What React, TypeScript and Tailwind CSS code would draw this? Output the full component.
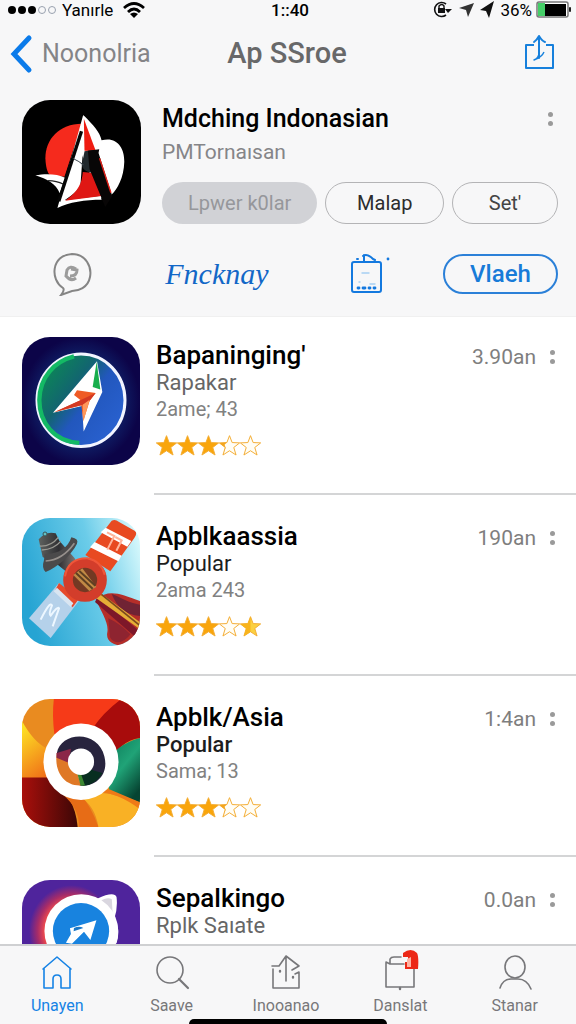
// ═══════════════════════════════════════════════
// App Store — product header + related apps list
// ═══════════════════════════════════════════════
import type { ReactNode } from 'react';

interface AppRow {
  name: string;
  category: string;
  meta: string;
  time: string;
  stars: StarKind[];
  strong?: boolean;
  dark?: boolean;
  icon: ReactNode;
}

type StarKind = 'full' | 'part' | 'half' | 'empty';

const STAR = 'M32 2 L40 23 L63 24 L45 38 L52 61 L32 48 L12 61 L19 38 L1 24 L24 23 Z';

function Star({ kind }: { kind: StarKind }) {
  return (
    <svg viewBox="0 0 64 64" className="size-[21px]" aria-hidden="true">
      <path
        d={STAR}
        fill={kind === 'full' ? '#f9a50b' : kind === 'half' ? '#fbd040' : '#fffdf5'}
        stroke="#f3ad35"
        strokeWidth="3"
        strokeLinejoin="round"
      />
      {kind === 'part' && <path d="M1 24 L24 23 L17 30 L20 38 L14 57 L19 38 Z" fill="#f3a51d" />}
      {kind === 'half' && <path d="M32 2 L24 23 L1 24 L19 38 L12 61 L32 48 Z" fill="#f8b41c" />}
    </svg>
  );
}

function MoreButton({ label }: { label: string }) {
  return (
    <button type="button" aria-label={label} className="flex w-4 flex-col items-center gap-1 py-1">
      <span className="size-[5px] rounded-full bg-[#9a9a9a]" />
      <span className="size-[5px] rounded-full bg-[#9a9a9a]" />
    </button>
  );
}

/* ── App icons ── */
function SailIcon() {
  return (
    <svg viewBox="68 30 356 372" preserveAspectRatio="none" className="h-[124px] w-[119px] shrink-0 rounded-[28px]" aria-hidden="true">
      <rect x="68" y="30" width="356" height="372" fill="#000" />
      <path d="M252 76 C282 106 300 125 306 151 C349 138 375 171 374 215 C373 263 352 299 337 313 L318 326 L302 322 L245 190 Z" fill="#fff" />
      <path d="M247 101 C180 101 137 148 138 205 C139 229 143 246 151 255 L195 260 Z" fill="#f52a1d" />
      <path d="M108 256 C137 250 174 251 197 263 L181 310 C169 281 143 267 108 256 Z" fill="#fff" />
      <path d="M146 272 Q172 273 191 282" fill="none" stroke="#222" strokeWidth="4" />
      <path d="M251 75 L257 86 L243 285 C232 308 211 320 196 330 L304 317 L306 329 C258 329 208 336 174 354 Z" fill="#fff" />
      <path d="M246 124 L178 334" stroke="#050505" strokeWidth="10" />
      <path d="M253 86 L289 184 L255 182 Z" fill="#ef1c12" />
      <path d="M250 246 L283 249 L306 318 L197 332 C237 304 247 280 250 246 Z" fill="#df1714" />
      <path d="M255 184 L281 180 L284 249 C265 248 249 240 247 225 Z" fill="#20282d" />
      <path d="M220 205 Q238 213 252 225" fill="none" stroke="#39434c" strokeWidth="3" />
      <path d="M265 182 L299 178 L297 189 L338 318 L317 351 L270 237 Z" fill="#080606" />
      <path d="M300 205 L334 308" stroke="#e32018" strokeWidth="4" />
    </svg>
  );
}

function CompassIcon() {
  return (
    <svg viewBox="68 38 354 382" preserveAspectRatio="none" className="h-32 w-[118px]" aria-hidden="true">
      <defs>
        <radialGradient id="night">
          <stop offset="0.55" stopColor="#102a72" />
          <stop offset="1" stopColor="#0c0448" />
        </radialGradient>
        <linearGradient id="dial" x1="0" y1="0" x2="1" y2="0.8">
          <stop offset="0.1" stopColor="#0b8b52" />
          <stop offset="0.42" stopColor="#126570" />
          <stop offset="0.6" stopColor="#2257bd" />
          <stop offset="1" stopColor="#2a62d2" />
        </linearGradient>
      </defs>
      <rect x="68" y="38" width="354" height="382" fill="url(#night)" />
      <ellipse cx="245" cy="227" rx="132" ry="138" fill="url(#dial)" stroke="#f2f5ff" strokeWidth="9" />
      <path d="M240 354 C164 350 120 293 120 226 C121 158 165 111 224 96" fill="none" stroke="#14b965" strokeWidth="13" />
      <path d="M293 110 L309 202 L253 320 L248 244 L161 264 Z" fill="#fff" />
      <path d="M292 112 L303 195 L280 187 Z" fill="#18ae4c" />
      <path d="M166 262 L244 227 L224 211 L233 197 L289 205 L271 228 L252 288 L246 242 Z" fill="#ef5b25" />
      <path d="M166 262 L246 225 L289 205 L264 237 Z" fill="#d33923" />
      <path d="M250 240 L271 225 L252 291 Z" fill="#ff985a" />
    </svg>
  );
}

function ToolsIcon() {
  return (
    <svg viewBox="68 40 354 384" preserveAspectRatio="none" className="h-32 w-[118px]" aria-hidden="true">
      <defs>
        <linearGradient id="sky" x1="0" y1="0.5" x2="1" y2="0.2">
          <stop offset="0" stopColor="#26a4d3" />
          <stop offset="0.6" stopColor="#6bcce9" />
          <stop offset="1" stopColor="#d6f8fc" />
        </linearGradient>
        <linearGradient id="metal">
          <stop offset="0" stopColor="#5f625f" />
          <stop offset="0.5" stopColor="#302f33" />
          <stop offset="1" stopColor="#8b8580" />
        </linearGradient>
      </defs>
      <rect x="68" y="40" width="354" height="384" fill="url(#sky)" />
      <path d="M290 284 C330 252 362 268 422 289 V385 L370 424 C339 421 319 409 324 383 C329 353 306 325 290 284 Z" fill="#b52e29" />
      <path d="M327 341 C351 353 370 365 393 389 C372 418 344 420 332 398 Z" fill="#8e2430" />
      <path d="M337 268 C365 278 388 295 422 300 V334 C377 329 354 309 337 268 Z" fill="#702334" />
      <path d="M296 274 L422 381 V409 L287 292 Z" fill="#7d1729" />
      <path d="M300 263 L422 353 V374 L291 281 Z" fill="#e5ad36" />
      <path d="M306 269 L422 363" stroke="#7c481f" strokeWidth="5" />
      <path d="M179 235 L238 290 L154 400 L89 341 Z" fill="#b5d1ea" />
      <path d="M179 235 L239 282 L220 308 L168 255 Z" fill="#e64a2c" />
      <path d="M173 249 L222 296 L214 307 L163 260 Z" fill="#d9e5f1" />
      <path d="M124 345 Q152 288 158 302 Q147 328 154 333 Q174 304 179 311 L160 365" fill="none" stroke="#edf7ff" strokeWidth="6" />
      <path d="M337 48 Q348 43 358 51 L407 79 Q415 86 405 100 L333 200 L258 151 Z" fill="#e84a21" />
      <path d="M286 112 L367 153 L357 170 L272 128 Z M319 69 L396 109 L384 126 L304 83 Z" fill="#fff" />
      <path d="M323 83 L345 94 L324 135 M348 97 L367 107 L351 138" fill="none" stroke="#ffb49b" strokeWidth="6" />
      <path d="M118 104 Q139 78 169 86 L180 108 L226 161 L239 190 L213 211 L177 182 L130 157 Z" fill="url(#metal)" />
      <path d="M136 147 C175 150 205 131 216 98 Q239 102 233 117 C217 151 173 188 139 202 Q126 191 134 166 Z" fill="#4b4a4b" />
      <path d="M139 169 Q189 167 225 116" fill="none" stroke="#96908c" strokeWidth="5" />
      <path d="M121 124 Q155 126 177 98 M127 136 Q164 134 184 110" fill="none" stroke="#9a9992" strokeWidth="4" />
      <circle cx="137" cy="88" r="6" fill="#62c1c5" stroke="#3d5255" strokeWidth="3" />
      <circle cx="257" cy="226" r="51" fill="#733923" stroke="#d33d2b" strokeWidth="29" />
      <path d="M222 211 L270 259 L291 247 L249 191 Z" fill="#c18a45" />
      <path d="M230 205 L280 252 M240 199 L288 243" stroke="#5e4022" strokeWidth="6" />
      <path d="M197 215 Q207 160 264 161 Q306 169 316 210" fill="none" stroke="#f05639" strokeWidth="6" />
    </svg>
  );
}

function SwirlIcon() {
  return (
    <svg viewBox="68 40 352 388" preserveAspectRatio="none" className="h-32 w-[118px]" aria-hidden="true">
      <defs>
        <linearGradient id="yellow" x1="0" y1="0" x2="0.6" y2="1">
          <stop offset="0" stopColor="#ffed25" />
          <stop offset="1" stopColor="#ef6817" />
        </linearGradient>
        <linearGradient id="maroon">
          <stop offset="0" stopColor="#a90f0b" />
          <stop offset="1" stopColor="#3c0706" />
        </linearGradient>
        <linearGradient id="green" x1="0" y1="0" x2="0.7" y2="1">
          <stop offset="0" stopColor="#087353" />
          <stop offset="0.55" stopColor="#20a377" />
          <stop offset="1" stopColor="#064432" />
        </linearGradient>
      </defs>
      <rect x="68" y="40" width="352" height="388" fill="#e98b20" />
      <path d="M163 40 H364 L250 230 L165 150 Q157 90 163 40 Z" fill="#f63a18" />
      <path d="M364 40 H420 V158 Q350 168 328 250 L244 230 Q252 126 364 40 Z" fill="#a80c0c" />
      <path d="M420 158 V354 L330 320 L310 250 Q340 180 420 158 Z" fill="url(#green)" />
      <path d="M68 107 Q103 172 144 191 L200 280 H68 Z" fill="url(#yellow)" />
      <path d="M68 278 H150 Q226 331 234 428 H68 Z" fill="url(#maroon)" />
      <path d="M190 330 Q239 371 238 428 H296 Q274 365 240 326 Z" fill="#e76c16" />
      <path d="M238 333 Q286 363 296 428 H420 V367 Q364 327 300 324 Z" fill="#f9b125" />
      <path d="M292 322 Q350 322 420 374 V353 L330 314 Z" fill="#ef7a17" />
      <ellipse cx="244" cy="230" rx="112" ry="116" fill="#fff" />
      <path d="M172 204 C183 139 295 131 314 215 C329 278 277 309 240 302 L244 230 Z" fill="#28243e" />
      <path d="M172 204 L220 220 L244 302 C190 305 163 254 172 204 Z" fill="#df7826" />
      <path d="M171 204 L214 191 L207 233 L171 218 Z" fill="#8b2748" />
      <path d="M237 260 L249 303 C275 302 296 286 308 264 L269 253 Z" fill="#082e20" />
      <path d="M233 266 L243 303 L256 302 L243 264 Z" fill="#3c8831" />
      <ellipse cx="244" cy="230" rx="39" ry="40" fill="#fff" />
    </svg>
  );
}

function PointerIcon() {
  return (
    <svg viewBox="68 40 352 384" preserveAspectRatio="none" className="h-32 w-[118px]" aria-hidden="true">
      <defs>
        <radialGradient id="glow" cx="0.42" cy="0.4" r="0.36">
          <stop offset="0.6" stopColor="#ff5147" />
          <stop offset="0.8" stopColor="#a72c68" />
          <stop offset="1" stopColor="#4f249c" />
        </radialGradient>
      </defs>
      <rect x="68" y="40" width="352" height="384" fill="url(#glow)" />
      <path d="M292 96 Q343 73 350 91 Q354 123 344 154 Q363 190 350 230 L270 240 Z" fill="#fff" />
      <path d="M300 104 Q323 89 336 98 L338 136 L323 135 Z" fill="#d9d6df" />
      <circle cx="245" cy="193" r="110" fill="#fff" />
      <circle cx="244" cy="193" r="84" fill="#1883df" />
      <path d="M290 161 L211 185 L214 202 L199 228 L217 231 L253 195 L272 220 Z" fill="#fff" />
      <path d="M223 184 Q239 177 251 184 L222 194 Z" fill="#1977c7" />
    </svg>
  );
}

const ROWS: AppRow[] = [
  { name: "Bapaninging'", category: 'Rapakar', meta: '2ame; 43', time: '3.90an', stars: ['full', 'full', 'full', 'part', 'empty'], icon: <CompassIcon /> },
  { name: 'Apblkaassia', category: 'Popular', meta: '2ama 243', time: '190an', stars: ['full', 'full', 'full', 'empty', 'half'], dark: true, icon: <ToolsIcon /> },
  { name: 'Apblk/Asia', category: 'Popular', meta: 'Sama; 13', time: '1:4an', stars: ['full', 'full', 'full', 'part', 'empty'], strong: true, dark: true, icon: <SwirlIcon /> },
  { name: 'Sepalkingo', category: 'Rplk Saıate', meta: '', time: '0.0an', stars: [], icon: <PointerIcon /> },
];

/* ── Tab bar icons, all on a 38px canvas ── */
function TabIcon({ children }: { children: ReactNode }) {
  return (
    <svg viewBox="0 0 38 38" className="size-[38px]" fill="none" stroke="currentColor" strokeWidth="1.6" strokeLinecap="round" strokeLinejoin="round" aria-hidden="true">
      {children}
    </svg>
  );
}

const TABS = [
  { label: 'Unayen', icon: <path d="M5 15 L19 3 L33 15 M6 14 V34 H15 V25 Q15 21 19 21 Q23 21 23 25 V34 H32 V14" /> },
  { label: 'Saave', icon: <><circle cx="17" cy="16" r="13" /><path d="M26 25 L35 34" strokeWidth="2.2" /></> },
  { label: 'Inooanao', icon: <><path d="M19 2 V27 M5 12 H12 L19 2 L32 12 L25 16 M6 15 V34 H32 V18 M32 18 L28 20" /><path d="M13 17 V17.5 M26 23 V23.5" strokeWidth="2.4" /></> },
  { label: 'Danslat', icon: <><path d="M5 8 V33 H33 V8 M5 8 L9 10 H23 M9 10 V5 Q10 3 13 3 H20" /><path d="M19 34 V35" strokeWidth="2.4" /></> },
  { label: 'Stanar', icon: <><ellipse cx="19" cy="13" rx="10" ry="11" /><path d="M4 34 Q7 25 15 25 H22 Q31 25 35 35" /></> },
];

export default function App() {
  return (
    <div className="relative flex h-screen flex-col overflow-hidden bg-white font-[Roboto,'Liberation_Sans',sans-serif] text-black">
      <header className="shrink-0 border-b border-[#f0f0f0] bg-[#f7f7f8]">
        {/* Status bar */}
        <div className="grid h-5 grid-cols-[1fr_auto_1fr] items-center pr-1 pl-2 text-[17px] leading-5">
          <div className="flex items-center gap-1.5">
            <span className="flex gap-[2px]">
              {[0, 1, 2].map((i) => <span key={i} className="size-2 rounded-full bg-black" />)}
              {[3, 4].map((i) => <span key={i} className="size-2 rounded-full border border-gray-400" />)}
            </span>
            <span>Yanırle</span>
            <svg viewBox="0 0 22 17" className="ml-1 h-[17px] w-[22px]" fill="none" stroke="#000" strokeWidth="2.8" aria-hidden="true">
              <path d="M1 6 Q11 -3 21 6 M5 10 Q11 4 17 10" />
              <path d="M7 12 Q11 9 15 12 L11 16 Z" fill="#000" stroke="none" />
            </svg>
          </div>
          <span className="font-medium">1::40</span>
          <div className="flex items-center justify-end gap-1">
            <svg viewBox="0 0 64 18" className="h-[18px] w-16" aria-hidden="true">
              <path d="M14 3 A7 7 0 1 0 14 14" fill="none" stroke="#111" strokeWidth="1.6" />
              <path d="M13 8 H20 L16 12 Z M6 7 H13 V12 H6 Z" fill="#111" />
              <path d="M7 7 V5 Q10 2 12 5 V7" fill="none" stroke="#111" strokeWidth="1.4" />
              <path d="M27 7 L42 2 L36 16 L34 9 Z" fill="#333" />
              <path d="M48 9 L62 0 L57 17 L54 10 Z" fill="#111" />
            </svg>
            <span>36%</span>
            <svg viewBox="0 0 36 18" className="h-[18px] w-9" aria-hidden="true">
              <rect x="1" y="1" width="31" height="15" rx="2" fill="#fff" stroke="#777" strokeWidth="1.5" />
              <rect x="2" y="2" width="7" height="13" fill="#45ce68" />
              <rect x="9" y="3" width="21" height="12" fill="#000" />
              <rect x="33" y="6" width="2" height="5" rx="1" fill="#222" />
            </svg>
          </div>
        </div>

        {/* Navigation */}
        <nav className="grid h-[68px] grid-cols-[1fr_auto_1fr] items-center pr-5 pl-[10px]">
          <a href="#back" className="flex items-center gap-2 text-[25px] text-[#848487]">
            <svg viewBox="0 0 24 40" className="h-10 w-6" fill="none" stroke="#0b7bea" strokeWidth="5" strokeLinecap="round" aria-hidden="true">
              <path d="M19 4 L4 20 L19 36" />
            </svg>
            Noonolria
          </a>
          <h1 className="ml-2 text-[29px] font-medium text-[#686869]">Ap SSroe</h1>
          <button type="button" aria-label="Share" className="justify-self-end">
            <svg viewBox="0 0 34 40" className="h-10 w-[34px]" fill="none" stroke="#1780dc" strokeWidth="2" strokeLinejoin="round" aria-hidden="true">
              <path d="M12 11 H4 V34 H31 V11 H24" />
              <path d="M17 24 V3 M12 8 Q15 6 17 2 Q20 7 23 8" strokeLinecap="round" />
              <path d="M22 18 Q20 23 12 26 Q17 24 17 18" strokeWidth="1.4" />
            </svg>
          </button>
        </nav>

        {/* Product */}
        <section className="flex gap-[21px] pt-3 pr-[18px] pl-[22px]">
          <SailIcon />
          <div className="min-w-0 flex-1">
            <div className="flex h-[38px] items-center justify-between">
              <h2 className="text-[25px] leading-8 font-medium">Mdching Indonasian</h2>
              <MoreButton label="More about this app" />
            </div>
            <p className="h-11 text-[21px] leading-7 text-[#858588]">PMTornaısan</p>
            <div className="flex h-[42px] gap-2 text-xl">
              <button type="button" className="flex-[157] rounded-full bg-[#d1d2d6] text-[#96979b]">Lpwer k0lar</button>
              <button type="button" className="flex-[118] rounded-full border border-[#b4b4b6] text-[#2c2c2d]">Malap</button>
              <button type="button" className="flex-[105] rounded-full border border-[#b4b4b6] text-[#444]">Set'</button>
            </div>
          </div>
        </section>

        {/* Actions */}
        <section className="flex h-[92px] items-center justify-between pt-2 pr-[18px] pl-[52px]">
          <button type="button" aria-label="Comment">
            <svg viewBox="0 0 40 44" className="h-11 w-10" fill="none" stroke="#858585" strokeWidth="2" aria-hidden="true">
              <path d="M11 36 C-2 28 -1 3 20 2 C34 2 40 15 38 25 C36 36 26 39 20 39 L9 43 Q13 38 11 36 Z" />
              <path d="M24 17 Q18 13 15 18 L14 24 Q19 30 24 26 M18 24 Q25 24 25 18 L19 17" strokeWidth="3" opacity="0.8" />
            </svg>
          </button>
          <a href="#feature" className="ml-8 font-[Z003,'URW_Chancery_L','Liberation_Serif',serif] text-[30px] leading-10 text-[#1267c7] italic">Fncknay</a>
          <button type="button" aria-label="Bag" className="ml-9">
            <svg viewBox="0 0 44 44" className="h-11 w-11" fill="none" stroke="#1479df" strokeWidth="2" strokeLinecap="round" aria-hidden="true">
              <rect x="6" y="10" width="29" height="30" rx="2" />
              <path d="M18 9 V3 M17 4 Q21 1 27 7 M11 7 H12 M27 7 L29 8" />
              <path d="M12 36 H13 M17 36 H19 M23 36 H24 M28 36 H29" strokeWidth="2.8" />
              <path d="M16 21 H23 M13 30 H14 M24 32 H29" stroke="#a6cff2" strokeWidth="1.4" />
              <circle cx="42" cy="7" r="1.4" fill="#1479df" stroke="none" />
            </svg>
          </button>
          <button type="button" className="ml-3 h-10 w-[115px] rounded-full border-2 border-[#2b80d8] text-2xl font-medium text-[#187bd8]">Vlaeh</button>
        </section>
      </header>

      {/* Related apps */}
      <main className="min-h-0 flex-1 overflow-y-auto [scrollbar-width:none]">
        <ul className="flex flex-col gap-[23px] pt-5 pl-[22px]">
          {ROWS.map((row) => (
            <li key={row.name} className="flex gap-[14px]">
              <div className="h-32 w-[118px] shrink-0 overflow-hidden rounded-[28px]">{row.icon}</div>
              <div className="flex flex-1 items-start justify-between border-b-2 border-[#d4d5d6] pt-1 pr-4 pb-[37px] pl-[2px]">
                <div>
                  <h3 className="text-[26px] leading-7 font-medium">{row.name}</h3>
                  <p className={`text-[22px] leading-[27px] ${row.strong ? 'font-medium' : ''} ${row.dark ? 'text-[#1d1d1d]' : 'text-[#666]'}`}>{row.category}</p>
                  {row.meta && <p className="text-xl leading-[27px] text-[#818181]">{row.meta}</p>}
                  {row.stars.length > 0 && (
                    <div className="mt-3 flex" role="img" aria-label="Rating">
                      {row.stars.map((kind, i) => <Star key={i} kind={kind} />)}
                    </div>
                  )}
                </div>
                <div className="flex items-center gap-2 text-[21px] leading-8 text-[#7e7e7e]">
                  <span>{row.time}</span>
                  <MoreButton label={`More about ${row.name}`} />
                </div>
              </div>
            </li>
          ))}
        </ul>
      </main>

      {/* Tab bar */}
      <nav className="grid h-20 shrink-0 grid-cols-5 border-t-2 border-[#cfd0d2] bg-[#f7f7f8] pt-2 pr-1">
        {TABS.map((tab, i) => (
          <a key={tab.label} href={`#${tab.label}`} className={`flex flex-col items-center gap-[2px] text-base leading-6 ${i === 0 ? 'text-[#1683e5]' : 'text-[#77777a]'}`}>
            <span className="relative">
              <TabIcon>{tab.icon}</TabIcon>
              {tab.label === 'Danslat' && (
                <svg viewBox="0 0 17 20" className="absolute -top-1 right-0 h-5 w-[17px]" aria-hidden="true">
                  <path d="M1 3 Q9 -3 15 3 Q17 7 16 19 H3 V12 H6 V7 H1 Z" fill="#ec2817" />
                  <path d="M5 9 L9 7 V17 H5 Z" fill="#ffb4a4" />
                </svg>
              )}
            </span>
            {tab.label}
          </a>
        ))}
      </nav>
      <div className="absolute bottom-0 left-1/2 h-[5px] w-[198px] -translate-x-1/2 rounded-t-md bg-black" />
    </div>
  );
}
